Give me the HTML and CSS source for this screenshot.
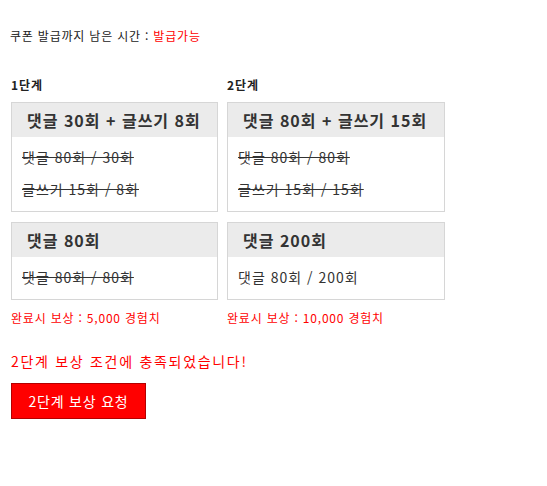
FILE: index.html
```html
<!DOCTYPE html>
<html lang="ko">
  <head>
    <meta charset="UTF-8" />
    <title>쿠폰 발급</title>
    <link rel="stylesheet" href="styles.css">
  </head>

  <body>
    <p class="timer">쿠폰 발급까지 남은 시간 : <span class="red">발급가능</span></p>

    <div class="stages">
      <div class="stage stage-1">
        <div class="stage-title">1단계</div>

        <div class="card">
          <div class="card-head">댓글 30회 + 글쓰기 8회</div>
          <div class="card-body">
            <div class="done">댓글 80회 / 30회</div>
            <div class="done">글쓰기 15회 / 8회</div>
          </div>
        </div>

        <div class="card">
          <div class="card-head">댓글 80회</div>
          <div class="card-body">
            <div class="done">댓글 80회 / 80회</div>
          </div>
        </div>

        <div class="reward">완료시 보상 : 5,000 경험치</div>
      </div>
      <!--stage 1 end-->

      <div class="stage stage-2">
        <div class="stage-title">2단계</div>

        <div class="card">
          <div class="card-head">댓글 80회 + 글쓰기 15회</div>
          <div class="card-body">
            <div class="done">댓글 80회 / 80회</div>
            <div class="done">글쓰기 15회 / 15회</div>
          </div>
        </div>

        <div class="card">
          <div class="card-head">댓글 200회</div>
          <div class="card-body">
            <div>댓글 80회 / 200회</div>
          </div>
        </div>

        <div class="reward">완료시 보상 : 10,000 경험치</div>
      </div>
      <!--stage 2 end-->
    </div>

    <p class="message">2단계 보상 조건에 충족되었습니다!</p>
    <button type="button" class="request">2단계 보상 요청</button>
  </body>
</html>
```

FILE: styles.css
```css
html,
body {
  margin: 0;
  padding: 0;
  background: #fff;
  font-family: "Noto Sans CJK KR", "Noto Sans", sans-serif;
  color: #222;
}

body {
  padding: 0 11px;
}

.red {
  color: #ff0000;
}

.timer {
  margin: 28px 0 0 -1px;
  font-size: 12px;
  line-height: 16px;
  letter-spacing: 0.8px;
}

.stages {
  display: flex;
  gap: 9px;
  margin-top: 33px;
}

.stage-1 {
  width: 207px;
}

.stage-2 {
  width: 218px;
}

.stage-title {
  font-size: 12px;
  font-weight: bold;
  line-height: 16px;
  letter-spacing: 1px;
  margin-bottom: 9px;
}

.card {
  border: 1px solid #d6d6d6;
  margin-bottom: 10px;
}

.card-head {
  height: 34px;
  line-height: 34px;
  padding-left: 15px;
  background: #ebebeb;
  font-size: 16px;
  font-weight: bold;
  letter-spacing: 1px;
  color: #333;
  white-space: nowrap;
}

.card-body {
  padding: 4px 10px 6px;
  font-size: 14px;
  line-height: 32px;
  letter-spacing: 1px;
  color: #333;
}

.done {
  text-decoration: line-through;
}

.reward {
  margin-top: 2px;
  font-size: 12px;
  line-height: 16px;
  letter-spacing: 0.8px;
  color: #ff0000;
}

.message {
  margin: 25px 0 0;
  font-size: 14px;
  line-height: 20px;
  letter-spacing: 1.7px;
  color: #ff0000;
}

.request {
  display: block;
  margin-top: 12px;
  width: 135px;
  height: 36px;
  background: #ff0000;
  border: 1px solid #b40000;
  color: #fff;
  font-family: inherit;
  font-size: 14px;
  letter-spacing: 0.8px;
  padding: 0;
}
```
